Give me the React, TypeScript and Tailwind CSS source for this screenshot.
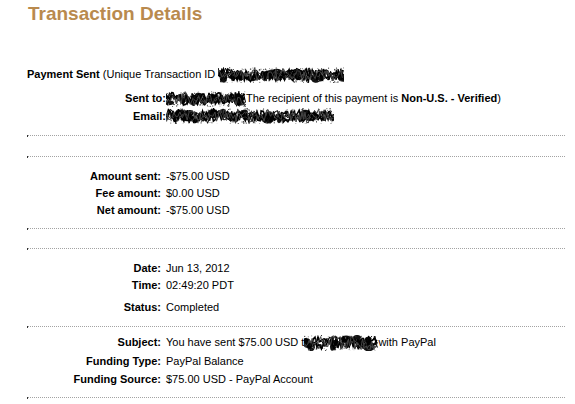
import React from "react";

// tiny seeded rng so the redaction scribbles look the same every render
function rng(seed: number) {
  let a = seed;
  return () => {
    a |= 0;
    a = (a + 0x6d2b79f5) | 0;
    let t = Math.imul(a ^ (a >>> 15), 1 | a);
    t = (t + Math.imul(t ^ (t >>> 7), 61 | t)) ^ t;
    return ((t ^ (t >>> 14)) >>> 0) / 4294967296;
  };
}

const Scribble: React.FC<{ w: number; h: number; seed: number; className?: string }> = ({
  w,
  h,
  seed,
  className,
}) => {
  const r = rng(seed);
  const strokes: { d: string; c: string; sw: number }[] = [];
  for (let pass = 0; pass < 6; pass++) {
    let d = `M0 ${h / 2}`;
    for (let x = 0; x <= w; x += 1 + r() * 1.6) {
      const y = h / 2 + (r() - 0.5) * h * (0.5 + 0.45 * r());
      d += ` L${x.toFixed(1)} ${y.toFixed(1)}`;
    }
    strokes.push({ d, c: pass % 3 === 2 ? "#444" : "#000", sw: pass < 2 ? 1.6 : 1 });
  }
  const blobs: { x: number; y: number; rx: number; ry: number }[] = [];
  for (let i = 0; i < w / 7; i++) {
    blobs.push({ x: r() * w, y: h / 2 + (r() - 0.5) * h * 0.5, rx: 2 + r() * 4, ry: 2 + r() * 3 });
  }
  const dots: { x: number; y: number; g: number }[] = [];
  for (let i = 0; i < w * 1.5; i++) {
    dots.push({ x: r() * w, y: r() * h, g: Math.floor(r() * 170) });
  }
  return (
    <svg width={w} height={h} viewBox={`0 0 ${w} ${h}`} className={className}>
      {blobs.map((b, i) => (
        <ellipse key={i} cx={b.x} cy={b.y} rx={b.rx} ry={b.ry} fill="#111" />
      ))}
      {dots.map((p, i) => (
        <rect key={i} x={p.x} y={p.y} width="1" height="1" fill={`rgb(${p.g},${p.g},${p.g})`} />
      ))}
      {strokes.map((s, i) => (
        <path key={i} d={s.d} fill="none" stroke={s.c} strokeWidth={s.sw} />
      ))}
    </svg>
  );
};

const Line: React.FC<{ mt: string }> = ({ mt }) => (
  <div className={`${mt} ml-[27px] w-[538px] flex items-center h-px`}>
    <span className="w-px h-[2px] bg-[#333]" />
    <div className="flex-1 border-t border-dotted border-[#a3a3a3]" />
  </div>
);

const Row: React.FC<{ label: string; mt?: string; children: React.ReactNode }> = ({
  label,
  mt = "",
  children,
}) => (
  <div className={`${mt} flex h-[17px] leading-[17px]`}>
    <div className="w-[166px] text-right font-bold pr-[5px] shrink-0">{label}</div>
    <div className="flex items-center whitespace-nowrap">{children}</div>
  </div>
);

export default function App() {
  return (
    <div
      className="w-[575px] h-[404px] overflow-hidden bg-white text-black text-[11px]"
      style={{ fontFamily: '"Liberation Sans", Arial, sans-serif' }}
    >
      <h1 className="mt-[3px] ml-[28px] h-[22px] leading-[22px] text-[19px] font-bold text-[#b98a4e]">
        Transaction Details
      </h1>

      <div className="mt-[41px] ml-[27px] flex items-center h-[17px] leading-[17px] whitespace-nowrap">
        <span className="font-bold">Payment Sent</span>
        <span>&nbsp;(Unique Transaction ID&nbsp;</span>
        <Scribble w={126} h={16} seed={11} />
      </div>

      <div className="mt-[7px] flex h-[17px] leading-[17px]">
        <div className="w-[166px] text-right font-bold shrink-0">Sent to:</div>
        <div className="flex items-center whitespace-nowrap">
          <Scribble w={80} h={16} seed={23} />
          <span>
            The recipient of this payment is <span className="font-bold">Non-U.S. - Verified</span>)
          </span>
        </div>
      </div>

      <div className="mt-[1px] flex h-[17px] leading-[17px]">
        <div className="w-[166px] text-right font-bold shrink-0">Email:</div>
        <Scribble w={168} h={16} seed={37} />
      </div>

      <Line mt="mt-[10px]" />
      <Line mt="mt-[20px]" />

      <Row label="Amount sent:" mt="mt-[11px]">-$75.00 USD</Row>
      <Row label="Fee amount:">$0.00 USD</Row>
      <Row label="Net amount:">-$75.00 USD</Row>

      <Line mt="mt-[9px]" />
      <Line mt="mt-[19px]" />

      <Row label="Date:" mt="mt-[11px]">Jun 13, 2012</Row>
      <Row label="Time:">02:49:20 PDT</Row>
      <Row label="Status:" mt="mt-[5px]">Completed</Row>

      <Line mt="mt-[10px]" />

      <Row label="Subject:" mt="mt-[7px]">
        <span>You have sent $75.00 USD t</span>
        <Scribble w={74} h={16} seed={51} />
        <span>with PayPal</span>
      </Row>
      <Row label="Funding Type:" mt="mt-[2px]">PayPal Balance</Row>
      <Row label="Funding Source:" mt="mt-[1px]">$75.00 USD - PayPal Account</Row>

      <Line mt="mt-[9px]" />
    </div>
  );
}
